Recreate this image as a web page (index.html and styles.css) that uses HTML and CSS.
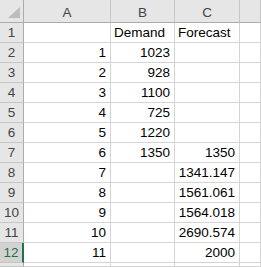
FILE: index.html
```html
<!DOCTYPE html>
<html lang="en">

<head>
    <meta charset="UTF-8" />
    <title>Sheet</title>
    <link rel="stylesheet" href="styles.css">
</head>

<body>
    <div class="sheet">
        <!-- column headers -->
        <div class="corner"><span class="tri"></span></div>
        <div class="colhead">A</div>
        <div class="colhead">B</div>
        <div class="colhead">C</div>
        <div class="colhead"></div>

        <div class="rowhead">1</div><div class="cell"></div><div class="cell txt">Demand</div><div class="cell txt">Forecast</div><div class="cell"></div>
        <div class="rowhead">2</div><div class="cell">1</div><div class="cell">1023</div><div class="cell"></div><div class="cell"></div>
        <div class="rowhead">3</div><div class="cell">2</div><div class="cell">928</div><div class="cell"></div><div class="cell"></div>
        <div class="rowhead">4</div><div class="cell">3</div><div class="cell">1100</div><div class="cell"></div><div class="cell"></div>
        <div class="rowhead">5</div><div class="cell">4</div><div class="cell">725</div><div class="cell"></div><div class="cell"></div>
        <div class="rowhead">6</div><div class="cell">5</div><div class="cell">1220</div><div class="cell"></div><div class="cell"></div>
        <div class="rowhead">7</div><div class="cell">6</div><div class="cell">1350</div><div class="cell">1350</div><div class="cell"></div>
        <div class="rowhead">8</div><div class="cell">7</div><div class="cell"></div><div class="cell">1341.147</div><div class="cell"></div>
        <div class="rowhead">9</div><div class="cell">8</div><div class="cell"></div><div class="cell">1561.061</div><div class="cell"></div>
        <div class="rowhead">10</div><div class="cell">9</div><div class="cell"></div><div class="cell">1564.018</div><div class="cell"></div>
        <div class="rowhead">11</div><div class="cell">10</div><div class="cell"></div><div class="cell">2690.574</div><div class="cell"></div>
        <div class="rowhead active">12</div><div class="cell">11</div><div class="cell"></div><div class="cell">2000</div><div class="cell"></div>
        <div class="rowhead"></div><div class="cell"></div><div class="cell"></div><div class="cell"></div><div class="cell"></div>
    </div>
</body>

</html>
```

FILE: styles.css
```css
html,
body {
    overflow: hidden;
}

body {
    margin: 0;
    background: #ffffff;
    font-family: 'Liberation Sans', Arial, sans-serif;
    font-size: 13.5px;
    color: #000000;
}

.sheet {
    display: grid;
    grid-template-columns: 24px 87px 64px 65px 21px;
    grid-template-rows: 23px repeat(12, 20px) 4px;
    overflow: hidden;
}

.corner,
.colhead,
.rowhead {
    background: #e6e6e6;
    color: #444444;
    border-right: 1px solid #c6c6c6;
    border-bottom: 1px solid #ababab;
    box-sizing: border-box;
    display: flex;
    align-items: center;
    justify-content: center;
}

.colhead {
    padding-top: 2px;
}

.rowhead {
    border-right: 1px solid #ababab;
    border-bottom: 1px solid #c6c6c6;
}

.rowhead.active {
    background: #d2d2d2;
    color: #217346;
    border-right: 2px solid #217346;
}

.corner {
    position: relative;
    border-right: 1px solid #ababab;
}

.tri {
    position: absolute;
    right: 3px;
    bottom: 4px;
    width: 0;
    height: 0;
    border-left: 12px solid transparent;
    border-bottom: 11px solid #bcbcbc;
}

.cell {
    border-right: 1px solid #d4d4d4;
    border-bottom: 1px solid #d4d4d4;
    box-sizing: border-box;
    display: flex;
    align-items: flex-end;
    justify-content: flex-end;
    padding: 0 4px 2px 3px;
    white-space: nowrap;
    overflow: hidden;
}

.cell.txt {
    justify-content: flex-start;
}
```
